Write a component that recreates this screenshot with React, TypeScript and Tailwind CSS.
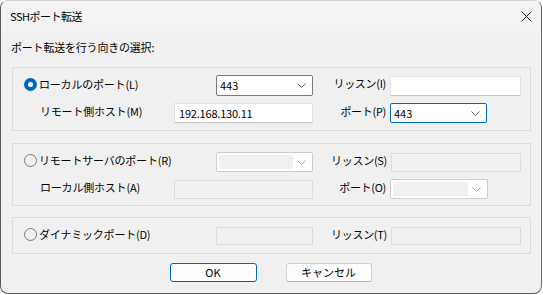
import React from "react";

const font = { fontFamily: '"Noto Sans CJK JP", "Noto Sans", sans-serif' };

function Chevron({ color = "#5f5f5f" }: { color?: string }) {
  return (
    <svg width="9" height="5" viewBox="0 0 9 5" className="shrink-0">
      <path d="M0.5 0.5 L4.5 4.5 L8.5 0.5" fill="none" stroke={color} strokeWidth="1" />
    </svg>
  );
}

function RadioChecked() {
  return (
    <span className="w-[13px] h-[13px] rounded-full bg-[#0067c0] flex items-center justify-center shrink-0">
      <span className="w-[5px] h-[5px] rounded-full bg-white" />
    </span>
  );
}

function RadioEmpty() {
  return <span className="w-[13px] h-[13px] rounded-full border border-[#7a7a7a] bg-[#f0f0f0] shrink-0" />;
}

function Label({ children, w }: { children: React.ReactNode; w: string }) {
  return (
    <div className={`${w} flex justify-end pr-[4px] text-[11px] tracking-[-0.3px] text-black leading-none pb-[4px]`}>{children}</div>
  );
}

export default function App() {
  return (
    <div className="w-[543px] h-[295px] bg-white" style={font}>
      <div className="w-[542px] h-[294px] border border-[#d4d4d4] border-l-[#5a5a5a] border-b-[#5a5a5a] border-r-[#6a6a6a] rounded-[8px] overflow-hidden bg-[#f0f0f0] flex flex-col">
        {/* title bar */}
        <div className="h-[30px] bg-[#f3f3f3] flex items-center justify-between pl-[9px] pr-[9px] shrink-0">
          <span className="text-[11px] text-black leading-none tracking-[-0.5px]">SSHポート転送</span>
          <svg width="11" height="11" viewBox="0 0 11 11">
            <path d="M0.5 0.5 L10.5 10.5 M10.5 0.5 L0.5 10.5" stroke="#1a1a1a" strokeWidth="1" />
          </svg>
        </div>
        {/* body */}
        <div className="flex flex-col pl-[11px]">
          <div className="mt-[8px] h-[16px] flex items-center text-[11px] tracking-[-0.2px] leading-none text-black -ml-[1px]">
            ポート転送を行う向きの選択:
          </div>

          {/* group 1 */}
          <div className="mt-[12px] w-[519px] h-[64px] border border-[#dcdcdc] flex flex-col pt-[7px]">
            <div className="flex items-center h-[21px]">
              <div className="w-[203px] flex items-center pl-[11px] gap-[2px] pb-[3px]">
                <RadioChecked />
                <span className="text-[11px] tracking-[-0.2px] leading-none text-black">ローカルのポート(L)</span>
              </div>
              <div className="w-[97px] h-[21px] bg-white border border-[#7a7a7a] rounded-[2px] flex items-center justify-between pl-[3px] pr-[6px]">
                <span className="text-[11px] leading-none text-black">443</span>
                <Chevron />
              </div>
              <Label w="w-[77px]">リッスン(I)</Label>
              <div className="w-[131px] h-[20px] bg-white border border-[#e2e2e2] border-b-[#c8c8c8]" />
            </div>
            <div className="flex items-center h-[20px] mt-[7px]">
              <div className="w-[161px] pl-[27px] text-[11px] tracking-[-0.2px] leading-none text-black pb-[4px]">リモート側ホスト(M)</div>
              <div className="w-[139px] h-[20px] bg-white border border-[#e2e2e2] border-b-[#c8c8c8] flex items-center pl-[4px]">
                <span className="text-[11px] tracking-[-0.2px] leading-none text-black">192.168.130.11</span>
              </div>
              <Label w="w-[77px]">ポート(P)</Label>
              <div className="w-[97px] h-[20px] bg-white border border-[#0067c0] rounded-[2px] flex items-center justify-between pl-[3px] pr-[6px]">
                <span className="text-[11px] leading-none text-black">443</span>
                <Chevron />
              </div>
            </div>
          </div>

          {/* group 2 */}
          <div className="mt-[12px] w-[519px] h-[63px] border border-[#dcdcdc] flex flex-col pt-[8px]">
            <div className="flex items-center h-[20px]">
              <div className="w-[203px] flex items-center pl-[11px] gap-[2px] pb-[4px]">
                <RadioEmpty />
                <span className="text-[11px] tracking-[-0.2px] leading-none text-black">リモートサーバのポート(R)</span>
              </div>
              <div className="w-[97px] h-[20px] bg-white border border-[#cccccc] rounded-[2px] flex items-center p-[2px]">
                <div className="w-[74px] h-full bg-[#f0f0f0]" />
                <div className="flex-1 flex justify-center">
                  <Chevron color="#a8a8a8" />
                </div>
              </div>
              <Label w="w-[78px]">リッスン(S)</Label>
              <div className="w-[130px] h-[19px] border border-[#dcdcdc]" />
            </div>
            <div className="flex items-center h-[20px] mt-[7px]">
              <div className="w-[161px] pl-[27px] text-[11px] tracking-[-0.2px] leading-none text-black pb-[4px]">ローカル側ホスト(A)</div>
              <div className="w-[139px] h-[19px] border border-[#dcdcdc]" />
              <Label w="w-[77px]">ポート(O)</Label>
              <div className="w-[98px] h-[20px] bg-white border border-[#cccccc] rounded-[2px] flex items-center p-[2px]">
                <div className="w-[75px] h-full bg-[#f0f0f0]" />
                <div className="flex-1 flex justify-center">
                  <Chevron color="#a8a8a8" />
                </div>
              </div>
            </div>
          </div>

          {/* group 3 */}
          <div className="mt-[11px] w-[519px] h-[37px] border border-[#dcdcdc] flex flex-col pt-[9px]">
            <div className="flex items-center h-[18px]">
              <div className="w-[203px] flex items-center pl-[11px] gap-[2px] pb-[4px]">
                <RadioEmpty />
                <span className="text-[11px] tracking-[-0.2px] leading-none text-black">ダイナミックポート(D)</span>
              </div>
              <div className="w-[97px] h-[18px] border border-[#dcdcdc]" />
              <Label w="w-[78px]">リッスン(T)</Label>
              <div className="w-[130px] h-[18px] border border-[#dcdcdc]" />
            </div>
          </div>

          {/* buttons */}
          <div className="mt-[9px] w-[519px] flex justify-center gap-[29px] -ml-[1px]">
            <div className="w-[87px] h-[19px] bg-[#fdfdfd] border border-[#0067c0] rounded-[3px] flex items-center justify-center text-[11px] leading-none text-black">
              OK
            </div>
            <div className="w-[86px] h-[19px] bg-[#fdfdfd] border border-[#d0d0d0] border-b-[#b0b0b0] rounded-[3px] flex items-center justify-center text-[11px] leading-none text-black">
              キャンセル
            </div>
          </div>
        </div>
      </div>
    </div>
  );
}
